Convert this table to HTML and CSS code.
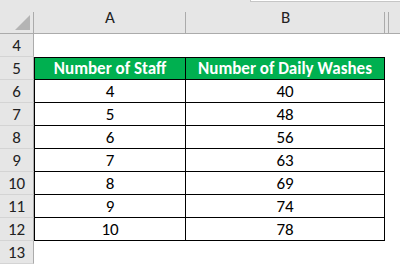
FILE: index.html
```html
<!DOCTYPE html>
<html>
<head>
<meta charset="utf-8">
<link rel="stylesheet" href="styles.css">
</head>
<body>
<div class="sheet">
  <div class="formula-edge"></div>
  <div class="corner"><span class="tri"></span></div>
  <div class="colhead">A</div>
  <div class="colhead">B</div>
  <div class="colhead rest"></div>

  <div class="rowhead">4</div><div class="cell"></div><div class="cell"></div><div class="cell"></div>

  <div class="rowhead">5</div><div class="t th first">Number of Staff</div><div class="t th last">Number of Daily Washes</div><div class="cell"></div>
  <div class="rowhead">6</div><div class="t first">4</div><div class="t last">40</div><div class="cell"></div>
  <div class="rowhead">7</div><div class="t first">5</div><div class="t last">48</div><div class="cell"></div>
  <div class="rowhead">8</div><div class="t first">6</div><div class="t last">56</div><div class="cell"></div>
  <div class="rowhead">9</div><div class="t first">7</div><div class="t last">63</div><div class="cell"></div>
  <div class="rowhead">10</div><div class="t first">8</div><div class="t last">69</div><div class="cell"></div>
  <div class="rowhead">11</div><div class="t first">9</div><div class="t last">74</div><div class="cell"></div>
  <div class="rowhead">12</div><div class="t first">10</div><div class="t last">78</div><div class="cell"></div>
  <div class="rowhead">13</div><div class="cell"></div><div class="cell"></div><div class="cell"></div>
</div>
</body>
</html>
```
FILE: styles.css
```css
html, body {
  margin: 0;
  padding: 0;
  background: #ffffff;
}
.sheet {
  position: relative;
  width: 400px;
  height: 265px;
  overflow: hidden;
  display: grid;
  grid-template-columns: 34px 152px 199px 1fr;
  grid-template-rows: 34px repeat(10, 23px);
  font-family: Carlito, Lato, "Liberation Sans", sans-serif;
  font-size: 17px;
  color: #000;
}
.formula-edge {
  position: absolute;
  left: 250px;
  top: 0;
  width: 150px;
  height: 1px;
  background: #ffffff;
  border-bottom: 1px solid #c6c6c6;
  border-left: 1px solid #c6c6c6;
  z-index: 2;
}
.corner, .colhead {
  position: relative;
  background: #e6e6e6;
  border-bottom: 1px solid #ababab;
  box-sizing: border-box;
}
.corner::after, .colhead::after {
  content: "";
  position: absolute;
  right: 0;
  top: 12px;
  bottom: 0;
  width: 1px;
  background: #ababab;
}
.corner .tri {
  position: absolute;
  left: 15px;
  top: 15px;
  width: 0;
  height: 0;
  border-left: 15px solid transparent;
  border-bottom: 15px solid #b4b4b4;
}
.colhead {
  display: flex;
  align-items: center;
  justify-content: center;
  padding-top: 2px;
  color: #222;
}
.colhead.rest::after {
  display: none;
}
.colhead.rest::before {
  content: "";
  position: absolute;
  left: 3px;
  top: 12px;
  bottom: 0;
  width: 1px;
  background: #ababab;
}
.rowhead {
  background: #e6e6e6;
  border-right: 1px solid #ababab;
  border-bottom: 1px solid #d4d4d4;
  box-sizing: border-box;
  display: flex;
  align-items: center;
  justify-content: center;
  color: #222;
}
.cell {
  background: #fff;
}
.t {
  display: flex;
  align-items: center;
  justify-content: center;
  border-right: 1px solid #000;
  border-bottom: 1px solid #000;
  box-sizing: border-box;
  background: #fff;
}
.t.first {
  border-left: 1px solid #000;
}
.th {
  background: #00b050;
  color: #fff;
  font-weight: bold;
  border-top: 1px solid #000;
}
```
